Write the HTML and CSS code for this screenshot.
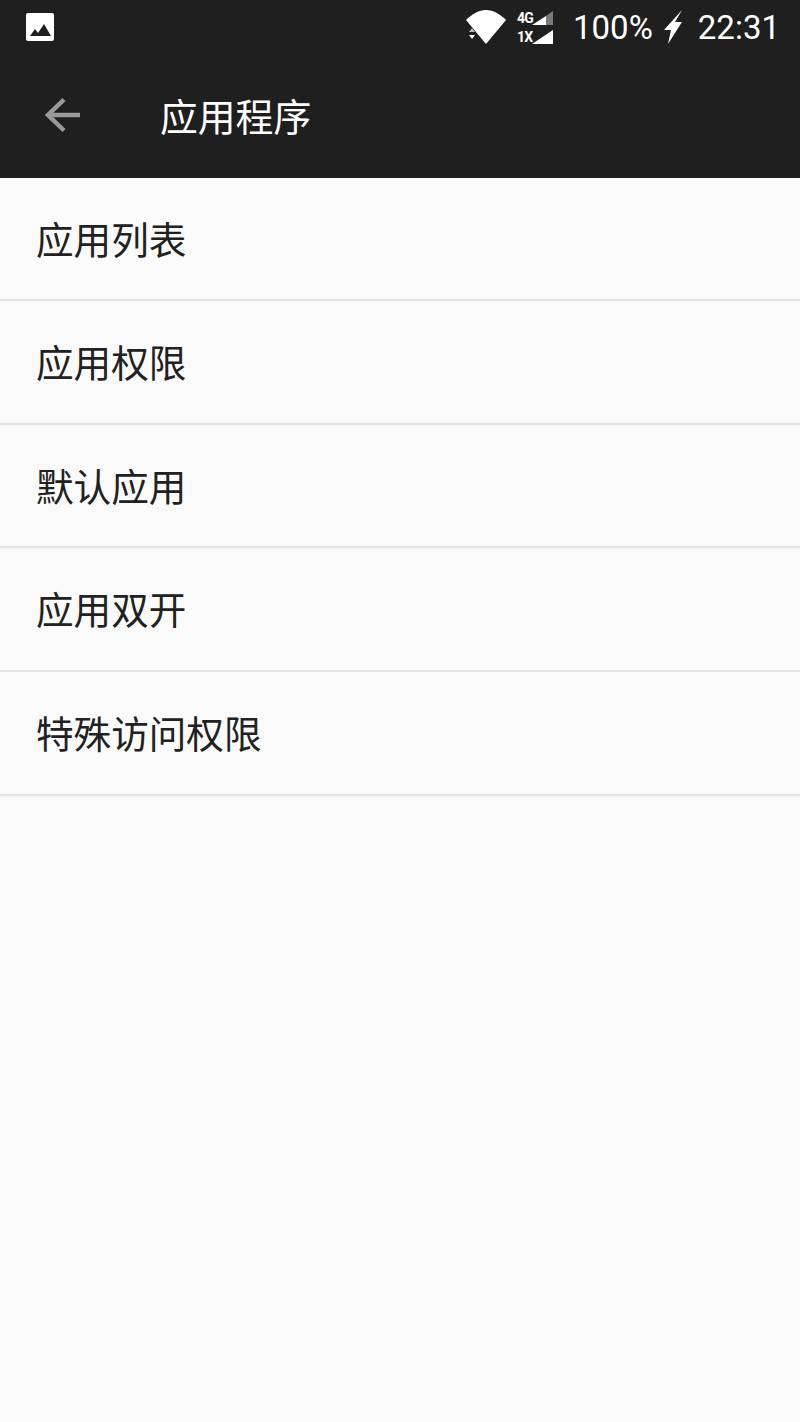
FILE: index.html
```html
<!DOCTYPE html>
<html lang="zh">
<head>
<meta charset="utf-8">
<title>应用程序</title>
<link rel="stylesheet" href="styles.css">
</head>
<body>
<header class="top">
  <div class="status">
    <svg class="ic-image" viewBox="0 0 30 30" width="30" height="30"><path fill="#fff" d="M3 1h24a2 2 0 0 1 2 2v24a2 2 0 0 1-2 2H3a2 2 0 0 1-2-2V3a2 2 0 0 1 2-2z"/><path fill="#1f1f1f" d="M5 24l5-7 3 4 6-9 7 12z"/></svg>
    <div class="status-right">
      <svg class="ic-wifi" viewBox="0 0 40 34" width="40" height="34"><path fill="#fff" d="M0 10C6 4 13 0 20 0s14 4 20 10L20 34z"/></svg>
      <svg class="ic-updown" viewBox="0 0 10 14" width="10" height="14"><path fill="#bbb" d="M5 0l3 4H2z"/><path fill="#fff" d="M5 11l3-4H2z"/></svg>
      <div class="signal">
        <div class="sig-row"><span class="sig-label">4G</span><svg viewBox="0 0 21 14" width="21" height="14"><path fill="#fff" d="M0 14L14 5v9z"/><path fill="#7a7a7a" d="M14 5l7-5v14h-7z"/></svg></div>
        <div class="sig-row"><span class="sig-label">1X</span><svg viewBox="0 0 21 14" width="21" height="14"><path fill="#fff" d="M0 14L21 0v14z"/></svg></div>
      </div>
      <span class="batt">100%</span>
      <svg class="ic-bolt" viewBox="0 0 20 34" width="20" height="34"><path fill="#fff" d="M19 0L1 20h7L5 34l14-22h-7z"/></svg>
      <span class="clock">22:31</span>
    </div>
  </div>
  <div class="toolbar">
    <svg class="ic-back" viewBox="0 0 38 36" width="38" height="36"><path fill="none" stroke="#9a9a9a" stroke-width="4.5" d="M37 18H5M21 2.5L5 18l16 15.5"/></svg>
    <h1 class="title">应用程序</h1>
  </div>
</header>
<main class="list">
  <div class="row">应用列表</div>
  <div class="row">应用权限</div>
  <div class="row">默认应用</div>
  <div class="row">应用双开</div>
  <div class="row">特殊访问权限</div>
</main>
</body>
</html>
```

FILE: styles.css
```css
* { box-sizing: border-box; }
html, body { margin: 0; padding: 0; }
body {
  width: 800px;
  height: 1422px;
  background: #fafafa;
  font-family: "Noto Sans CJK SC", "Roboto", sans-serif;
  overflow: hidden;
}
.top { background: #1f1f1f; height: 178px; color: #fff; }
.status {
  height: 54px;
  display: flex;
  align-items: center;
  justify-content: space-between;
  padding: 0 20px 0 25px;
}
.status-right { display: flex; align-items: center; }
.ic-updown { margin: 15px 0 0 -39px; }
.signal { display: flex; flex-direction: column; gap: 5px; margin-left: 40px; }
.sig-row { display: flex; align-items: flex-end; gap: 2px; height: 14px; }
.sig-label { font: 700 14px/14px "Roboto", sans-serif; width: 13px; letter-spacing: -0.9px; }
.batt, .clock { font: 400 33px/40px "Roboto", sans-serif; padding-top: 2px; }
.batt { margin-left: 20px; }
.ic-bolt { margin-left: 10px; }
.clock { margin-left: 15px; }
.toolbar {
  height: 124px;
  display: flex;
  align-items: center;
  padding: 0 0 0 43px;
}
.ic-back { margin-top: -2px; }
.title {
  margin: -2px 0 0 79px;
  font-size: 37.8px;
  font-weight: 400;
  line-height: 50px;
}
.list { display: flex; flex-direction: column; }
.row {
  height: 123.7px;
  padding: 0 0 3px 36px;
  display: flex;
  align-items: center;
  font-size: 37.6px;
  color: #212121;
  border-bottom: 2px solid #e3e3e3;
}
.row:first-child { height: 123px; }
```
